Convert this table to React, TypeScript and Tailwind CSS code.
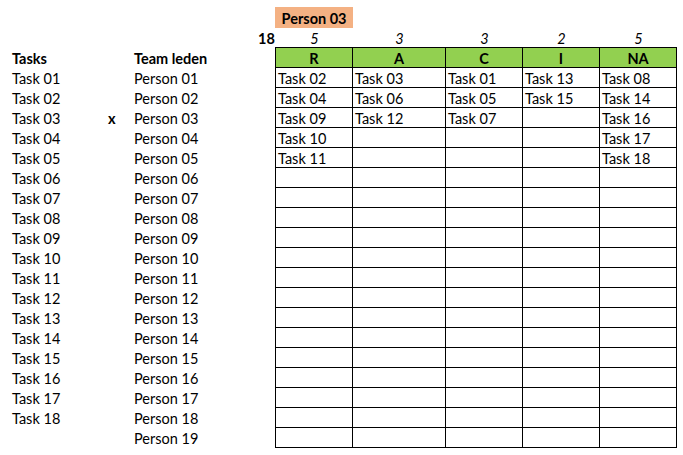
import { Fragment } from "react"

const tasks = Array.from({ length: 18 }, (_, i) => `Task ${String(i + 1).padStart(2, "0")}`)
const people = Array.from({ length: 19 }, (_, i) => `Person ${String(i + 1).padStart(2, "0")}`)

const columns = [
  { key: "R", items: ["Task 02", "Task 04", "Task 09", "Task 10", "Task 11"] },
  { key: "A", items: ["Task 03", "Task 06", "Task 12"] },
  { key: "C", items: ["Task 01", "Task 05", "Task 07"] },
  { key: "I", items: ["Task 13", "Task 15"] },
  { key: "NA", items: ["Task 08", "Task 14", "Task 16", "Task 17", "Task 18"] },
]

const selected = "Person 03"
const ROWS = 19

export default function App() {
  return (
    <div
      className="w-[683px] h-[455px] bg-white text-black text-[14.5px] leading-[22px] flex"
      style={{ fontFamily: "Lato, 'Open Sans', sans-serif" }}
    >
      {/* lijsten */}
      <div className="pt-[48px] grid grid-cols-[106px_28px_124px] auto-rows-[20px]">
        <div className="pl-[12px] font-bold">Tasks</div>
        <div />
        <div className="font-bold">Team leden</div>
        {
          people.map((p, i) => (
            <Fragment key={p}>
              <div className="pl-[12px]">{tasks[i] ?? ""}</div>
              <div className="pl-[2px] font-bold">{tasks[i] && p === selected ? "x" : ""}</div>
              <div>{p}</div>
            </Fragment>
          ))
        }
      </div>

      {/* matrix */}
      <div className="pt-[7px]">
        <div className="pl-[17px] h-[20px]">
          <div className="w-[78px] h-[21px] bg-[#F4B183] font-bold text-center leading-[23px]">{selected}</div>
        </div>

        <div className="flex h-[20px] italic leading-[23px]">
          <div className="w-[17px] text-right pr-[2px] font-bold not-italic">18</div>
          <div className="w-[78px] text-center pl-[1px]">{columns[0].items.length}</div>
          <div className="w-[93px] text-center">{columns[1].items.length}</div>
          {
            columns.slice(2).map((c) => (
              <div key={c.key} className="w-[77px] text-center">{c.items.length}</div>
            ))
          }
        </div>

        <div className="ml-[17px] border-l border-t border-black grid grid-cols-[77px_93px_77px_77px_77px] auto-rows-[20px]">
          {
            columns.map((c) => (
              <div key={c.key} className="bg-[#92D050] border-r border-b border-black text-center font-bold leading-[21px]">
                {c.key}
              </div>
            ))
          }
          {
            Array.from({ length: ROWS }, (_, r) => columns.map((c) => (
              <div key={`${c.key}-${r}`} className="border-r border-b border-black pl-[2px] leading-[21px] whitespace-nowrap">
                {c.items[r] ?? ""}
              </div>
            )))
          }
        </div>
      </div>
    </div>
  )
}
